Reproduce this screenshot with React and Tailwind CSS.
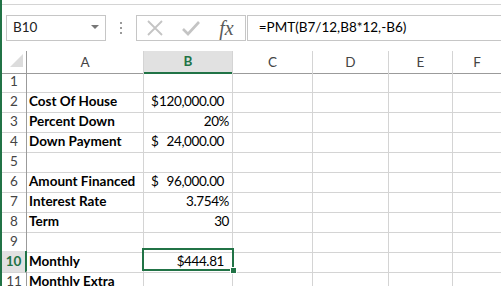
const COLS = ["A", "B", "C", "D", "E", "F"];

const ROWS = [
  { n: 1 },
  { n: 2, a: "Cost Of House", acct: "120,000.00" },
  { n: 3, a: "Percent Down", b: "20%" },
  { n: 4, a: "Down Payment", acct: "24,000.00" },
  { n: 5 },
  { n: 6, a: "Amount Financed", acct: "96,000.00" },
  { n: 7, a: "Interest Rate", b: "3.754%" },
  { n: 8, a: "Term", b: "30" },
  { n: 9 },
  { n: 10, a: "Monthly", b: "$444.81", pad: true, active: true },
  { n: 11, a: "Monthly Extra" },
];

const font = "font-['Lato','Liberation_Sans',sans-serif]";
const grid = "grid grid-cols-[25px_117px_89px_80px_76px_64px_48px]";

function Row({ row }) {
  return (
    <div className={grid + " h-[20px]"}>
      <div
        className={
          "flex items-end justify-center pb-[1px] text-[13.5px] border-b border-b-[#d4d4d4] " +
          (row.active
            ? "bg-[#e1e1e1] text-[#217346] font-bold border-r-2 border-r-[#217346]"
            : "text-[#444] border-r border-r-[#9b9b9b]")
        }
      >
        {row.n}
      </div>
      <div className="border-r border-b border-[#d4d4d4] flex items-end pl-[2px] pb-[1px] font-bold text-[13.5px] text-black whitespace-nowrap">
        {row.a}
      </div>
      <div className="border-r border-b border-[#d4d4d4] flex flex-col justify-end pb-[1px] text-[13.5px] tracking-[-0.4px] text-black">
        {row.acct ? (
          <div className="flex justify-between pl-[7px] pr-[8px]">
            <span>$</span>
            <span>{row.acct}</span>
          </div>
        ) : (
          <div className={"text-right " + (row.pad ? "pr-[8px]" : "pr-[3px]")}>{row.b}</div>
        )}
      </div>
      <div className="border-r border-b border-[#d4d4d4]" />
      <div className="border-r border-b border-[#d4d4d4]" />
      <div className="border-r border-b border-[#d4d4d4]" />
      <div className="border-b border-[#d4d4d4]" />
    </div>
  );
}

export default function App() {
  return (
    <div className={"relative w-[501px] h-[286px] overflow-hidden bg-white border-l-2 border-[#217346] " + font}>
      {/* top strip */}
      <div className="h-[5px] border-b border-[#d4d4d4]" />

      {/* formula bar */}
      <div className="flex items-center h-[46px] pb-[1px]">
        <div className="ml-[4px] w-[102px] h-[26px] border border-[#c6c6c6] flex items-center justify-between pl-[6px] pr-[6px] text-[13.5px] text-[#222]">
          <span>B10</span>
          <svg width="8" height="5" viewBox="0 0 8 5">
            <path d="M0 0 L8 0 L4 4 Z" fill="#777" />
          </svg>
        </div>
        <div className="w-[31px] flex flex-col items-center justify-center gap-[3px]">
          <span className="w-[2px] h-[2px] bg-[#9a9a9a]" />
          <span className="w-[2px] h-[2px] bg-[#9a9a9a]" />
          <span className="w-[2px] h-[2px] bg-[#9a9a9a]" />
        </div>
        <div className="w-[112px] h-[26px] border border-[#c6c6c6] flex items-center">
          <svg width="18" height="18" viewBox="0 0 18 18" className="ml-[9px]">
            <path d="M2 2 L16 16 M16 2 L2 16" stroke="#c4c4c4" strokeWidth="1.8" />
          </svg>
          <svg width="20" height="18" viewBox="0 0 20 18" className="ml-[17px]">
            <path d="M2 10 L7 15 L18 3" stroke="#c4c4c4" strokeWidth="2.6" fill="none" />
          </svg>
          <span className="ml-[18px] font-['Liberation_Serif',serif] italic text-[20px] text-[#5a5a5a] leading-none">
            fx
          </span>
        </div>
        <div className="ml-[1px] w-[260px] h-[26px] border border-r-0 border-[#c6c6c6] flex items-center pl-[11px] text-[13.5px] text-black">
          =PMT(B7/12,B8*12,-B6)
        </div>
      </div>

      {/* column headers */}
      <div className={grid + " h-[20px]"}>
        <div className="border-r border-b border-[#9b9b9b] relative">
          <svg width="14" height="14" viewBox="0 0 14 14" className="absolute left-[8px] top-[3px]">
            <path d="M13 0 L13 13 L0 13 Z" fill="#dcdcdc" />
          </svg>
        </div>
        {COLS.map((c, i) => (
          <div
            key={c}
            className={
              "flex items-end justify-center pb-[1px] text-[13.5px] " +
              (i < COLS.length - 1 ? "border-r border-r-[#d4d4d4] " : "") +
              (c === "B"
                ? "bg-[#e1e1e1] text-[#217346] font-bold border-b-2 border-b-[#217346]"
                : "text-[#444] border-b border-b-[#9b9b9b]")
            }
          >
            {c}
          </div>
        ))}
      </div>

      {ROWS.map((r) => (
        <Row key={r.n} row={r} />
      ))}

      {/* active cell B10 */}
      <div className="absolute left-[140px] top-[248px] w-[92px] h-[23px] border-2 border-[#217346]" />
      <div className="absolute left-[228px] top-[267px] w-[7px] h-[7px] bg-[#217346] border border-white" />
    </div>
  );
}
